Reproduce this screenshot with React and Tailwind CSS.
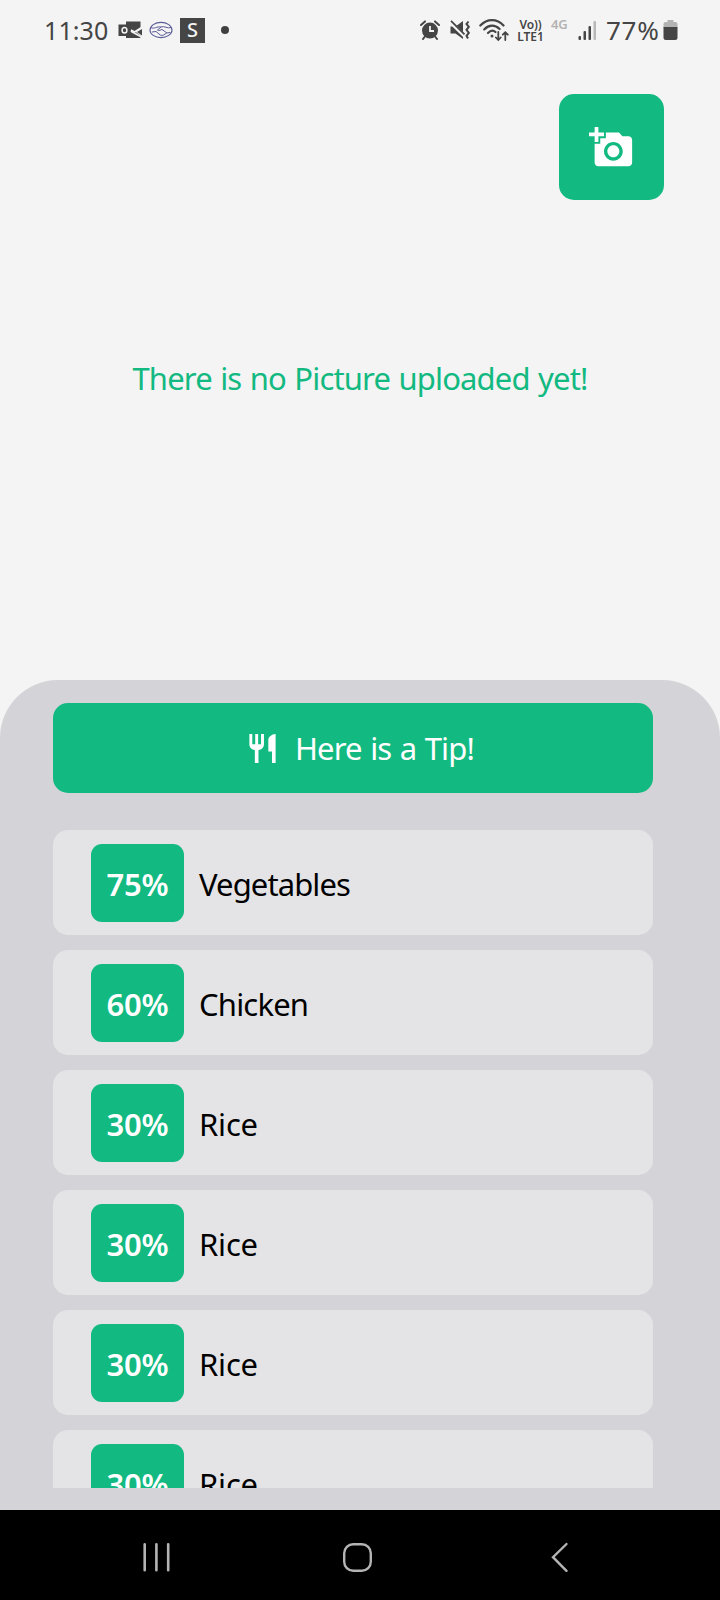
const items = [
  { percent: '75%', name: 'Vegetables', tracking: 'tracking-[-0.9px]' },
  { percent: '60%', name: 'Chicken', tracking: 'tracking-[-0.8px]' },
  { percent: '30%', name: 'Rice', tracking: 'tracking-[-0.2px]' },
  { percent: '30%', name: 'Rice', tracking: 'tracking-[-0.2px]' },
  { percent: '30%', name: 'Rice', tracking: 'tracking-[-0.2px]' },
  { percent: '30%', name: 'Rice', tracking: 'tracking-[-0.2px]' },
];

function LeftStatusIcons() {
  return (
    <div className="ml-[9px] flex items-center">
      <svg width="25" height="20" viewBox="0 0 25 20" className="shrink-0">
        <path d="M8 1.5H22.5V8L17 11.5L22.5 15.5V18H8Z" fill="#454545" />
        <path d="M12.5 11L23.5 17" stroke="#f4f4f4" strokeWidth="1.6" />
        <path d="M13 10L16.5 12L24 7.2" fill="none" stroke="#f4f4f4" strokeWidth="1.6" />
        <path d="M19 12L24 9V15.5Z" fill="#454545" />
        <rect x="0.5" y="4.5" width="12" height="11.5" fill="#454545" />
        <ellipse cx="6.5" cy="10.2" rx="2.4" ry="2.8" fill="none" stroke="#f4f4f4" strokeWidth="1.5" />
      </svg>
      <svg width="24" height="18" viewBox="0 0 24 18" className="ml-[6px] shrink-0" fill="none" stroke="#5a5c96">
        <ellipse cx="12" cy="9" rx="11" ry="7.6" strokeWidth="1.1" />
        <path d="M2 6.5C5 8.5 8 5 12 6C15 4.5 19 8 22 6.5" strokeWidth="1" />
        <path d="M12 6L8.5 9C10 10.5 12 8.5 13 8.5L18 12M3 11L7 10.5L11.5 14.2C14 15 15.5 13.5 17.5 12L21.5 11.5" strokeWidth="1" />
      </svg>
      <div className="ml-[7px] flex h-[25px] w-[25px] items-center justify-center bg-[#454545] text-[20px] leading-none font-medium text-[#f4f4f4]">S</div>
      <div className="ml-[16px] h-[8px] w-[8px] rounded-full bg-[#404040]" />
    </div>
  );
}

function AlarmIcon() {
  return (
    <svg width="20" height="20" viewBox="0 0 20 20" className="shrink-0">
      <circle cx="10" cy="10.6" r="8" fill="#454545" />
      <path d="M1 5L5 1.4M19 5L15 1.4M4.5 17L3 19M15.5 17L17 19" stroke="#454545" strokeWidth="2" strokeLinecap="round" />
      <path d="M10 6V11H14" fill="none" stroke="#f4f4f4" strokeWidth="1.8" />
    </svg>
  );
}

function VibrateIcon() {
  return (
    <svg width="20" height="20" viewBox="0 0 20 20" className="ml-[10px] shrink-0">
      <path d="M0.5 6.5H5.5L13 1V19L5.5 13.5H0.5Z" fill="#454545" />
      <path d="M0 1.8L14.5 16" stroke="#f4f4f4" strokeWidth="3.4" />
      <path d="M1 0.8L14.5 14.3" stroke="#454545" strokeWidth="1.8" />
      <path d="M18.5 1.5L16.5 4L18.8 6.8L16.5 9.8L18.8 12.8L16.5 15.8L18 18.5" fill="none" stroke="#454545" strokeWidth="2" />
    </svg>
  );
}

function WifiIcon() {
  return (
    <svg width="30" height="24" viewBox="0 0 30 24" className="ml-[9px] shrink-0" fill="none" stroke="#454545" strokeWidth="2.2" strokeLinecap="round">
      <path d="M1.3 7.5C8 0.2 18 0.2 24.5 7.5" />
      <path d="M5.2 11.4C10 6.5 16 6.5 20.6 11" />
      <path d="M9 15C11.5 12.4 14.5 12.3 16.5 14" />
      <circle cx="13" cy="18" r="0.7" fill="#454545" strokeWidth="1.6" />
      <path d="M19.3 14V22M16.9 19.5L19.3 22L21.7 19.5M26.3 22V14.5M23.8 16.7L26.3 14.2L28.8 16.7" strokeWidth="1.8" />
    </svg>
  );
}

function StatusBar() {
  return (
    <div className="flex h-[60px] items-center justify-between pr-[42px] pl-[44px] text-[#454545]">
      <div className="flex items-center">
        <span className="w-[65px] text-[25px] leading-none tracking-[0.1px] whitespace-nowrap">11:30</span>
        <LeftStatusIcons />
      </div>
      <div className="flex items-center">
        <AlarmIcon />
        <VibrateIcon />
        <WifiIcon />
        <div className="ml-[8px] w-[27px] pt-px text-center text-[12px] leading-[12px] font-semibold tracking-[-0.1px] whitespace-nowrap">
          Vo))
          <br />
          LTE1
        </div>
        <span className="ml-[7px] w-[18px] pb-[11px] text-[13px] leading-none font-semibold tracking-[-0.2px] text-[#b3b3b3]">4G</span>
        <svg width="20" height="20" viewBox="0 0 20 20" className="ml-[9px] shrink-0">
          <rect x="0.5" y="16" width="2.5" height="4" rx="1" fill="#454545" />
          <rect x="5.5" y="11" width="2.5" height="9" rx="1" fill="#454545" />
          <rect x="10.5" y="6" width="2.5" height="14" rx="1" fill="#454545" />
          <rect x="15.5" y="1" width="2.5" height="19" rx="1" fill="#b8b8b8" />
        </svg>
        <span className="ml-[8px] w-[56px] text-[26px] leading-none tracking-[0.7px] whitespace-nowrap">77%</span>
        <svg width="15" height="20" viewBox="0 0 15 20" className="ml-px shrink-0">
          <path d="M4.5 0H10.5V2H12.5Q14.5 2 14.5 4V8H0.5V4Q0.5 2 2.5 2H4.5Z" fill="#b3b3b3" />
          <path d="M0.5 7H14.5V17.5Q14.5 20 12 20H3Q0.5 20 0.5 17.5Z" fill="#454545" />
        </svg>
      </div>
    </div>
  );
}

function FoodRow({ percent, name, tracking }) {
  return (
    <li className="flex h-[105px] shrink-0 items-center rounded-[15px] bg-[#e4e4e7] pl-[38px]">
      <div className="mt-px flex h-[78px] w-[93px] items-center justify-center rounded-[11px] bg-[#12b981] pt-px text-[31px] leading-[44px] font-[650] tracking-[-0.2px] text-white">{percent}</div>
      <span className={`ml-[15px] pt-[2px] text-[31px] leading-[44px] whitespace-nowrap text-black ${tracking}`}>{name}</span>
    </li>
  );
}

function NavBar() {
  return (
    <nav className="flex h-[90px] items-center bg-black pt-[5px] pl-[142px]">
      <svg width="29" height="31" viewBox="0 0 29 31" stroke="#b4b4b4" strokeWidth="2.6" strokeLinecap="round">
        <path d="M2.7 2.3V28.2M14.4 2.3V28.2M26.2 2.3V28.2" />
      </svg>
      <svg width="31" height="31" viewBox="0 0 31 31" className="ml-[171px]" fill="none" stroke="#b4b4b4" strokeWidth="2.4">
        <rect x="2.2" y="2.2" width="26.6" height="26.6" rx="9" />
      </svg>
      <svg width="20" height="31" viewBox="0 0 20 31" className="ml-[177px]" fill="none" stroke="#b4b4b4" strokeWidth="2.4" strokeLinecap="round">
        <path d="M16.5 2L3 15.2L16.5 28.8" />
      </svg>
    </nav>
  );
}

export default function App() {
  return (
    <div className="flex h-[1600px] w-[720px] flex-col overflow-hidden bg-[#f4f4f4] font-['Noto_Sans',sans-serif]">
      <StatusBar />
      <main className="flex h-[620px] flex-col">
        <div className="flex justify-end pt-[34px] pr-[56px]">
          <button aria-label="Add photo" className="flex h-[106px] w-[105px] items-center justify-center rounded-[15px] bg-[#12b981]">
            <svg width="45" height="45" viewBox="0 0 24 24" fill="#ffffff">
              <path d="M3 4V1h2v3h3v2H5v3H3V6H0V4h3zm3 6V7h3V4h7l1.83 2H21c1.1 0 2 .9 2 2v12c0 1.1-.9 2-2 2H5c-1.1 0-2-.9-2-2V10h3zm7 9c2.76 0 5-2.24 5-5s-2.24-5-5-5-5 2.24-5 5 2.24 5 5 5zm-3.2-5c0 1.77 1.43 3.2 3.2 3.2s3.2-1.43 3.2-3.2-1.43-3.2-3.2-3.2-3.2 1.43-3.2 3.2z" />
            </svg>
          </button>
        </div>
        <p className="mt-[156px] text-center text-[31px] leading-[44px] tracking-[-0.85px] [word-spacing:1.2px] whitespace-nowrap text-[#12b981]">There is no Picture uploaded yet!</p>
      </main>
      <section className="flex h-[830px] flex-col rounded-t-[58px] bg-[#d4d4d8] pt-[23px] pr-[67px] pl-[53px]">
        <button className="flex h-[90px] shrink-0 items-center rounded-[15px] bg-[#12b981] pl-[192px] text-white">
          <svg width="35" height="35" viewBox="0 0 24 24" fill="currentColor" className="shrink-0">
            <path d="M11 9H9V2H7v7H5V2H3v7c0 2.12 1.66 3.84 3.75 3.97V22h2.5v-9.03C11.34 12.84 13 11.12 13 9V2h-2v7zm5-3v8h2.5v8H21V2c-2.76 0-5 2.24-5 4z" />
          </svg>
          <span className="ml-[15px] text-[31px] leading-[44px] tracking-[-0.85px] [word-spacing:1.2px] whitespace-nowrap">Here is a Tip!</span>
        </button>
        <ul className="mt-[37px] flex h-[658px] flex-col gap-[15px] overflow-hidden">
          {items.map((item, index) => (
            <FoodRow key={index} percent={item.percent} name={item.name} tracking={item.tracking} />
          ))}
        </ul>
      </section>
      <NavBar />
    </div>
  );
}
